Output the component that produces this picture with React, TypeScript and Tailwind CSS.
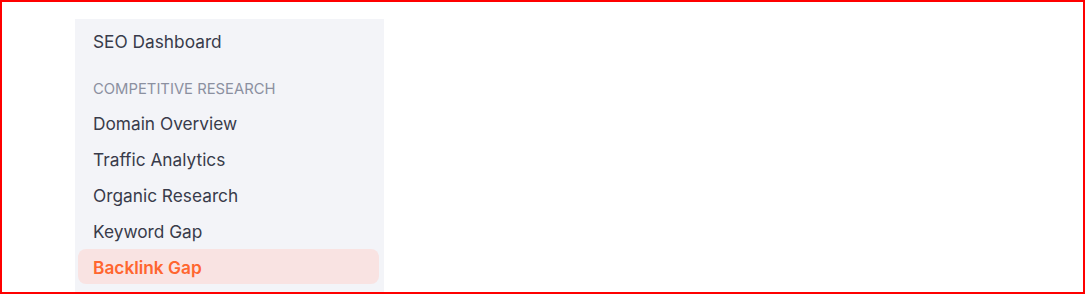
const ITEMS = [
  { label: 'Domain Overview' },
  { label: 'Traffic Analytics' },
  { label: 'Organic Research' },
  { label: 'Keyword Gap' },
  { label: 'Backlink Gap', active: true },
]

export default function App() {
  return (
    <div
      className="h-[294px] w-[1085px] overflow-hidden border-2 border-[#ff0000] bg-white pl-[73px] pt-[17px]"
      style={{ fontFamily: 'Inter, "Noto Sans", sans-serif' }}
    >
      {/* sidebar */}
      <nav className="h-[300px] w-[309px] bg-[#f3f4f8] pl-[3px] pr-[5px] pt-[5px]">
        <a className="flex h-9 items-center rounded-lg pl-[15px] text-[17.3px] text-[#383b4a]">SEO Dashboard</a>

        <div className="mt-5 pl-[15px] text-[14.8px] leading-[18px] uppercase text-[#8b90a0]">
          Competitive Research
        </div>

        <div className="mt-[7px] flex flex-col">
          {ITEMS.map(item => (
            <a
              key={item.label}
              className={
                item.active
                  ? 'flex h-[35px] items-center rounded-lg bg-[#f9e3e2] pl-[15px] pt-[2px] text-[17.3px] font-semibold text-[#ff662f]'
                  : 'flex h-9 items-center rounded-lg pl-[15px] pt-px text-[17.3px] text-[#383b4a]'
              }
            >
              {item.label}
            </a>
          ))}
        </div>
      </nav>
    </div>
  )
}
